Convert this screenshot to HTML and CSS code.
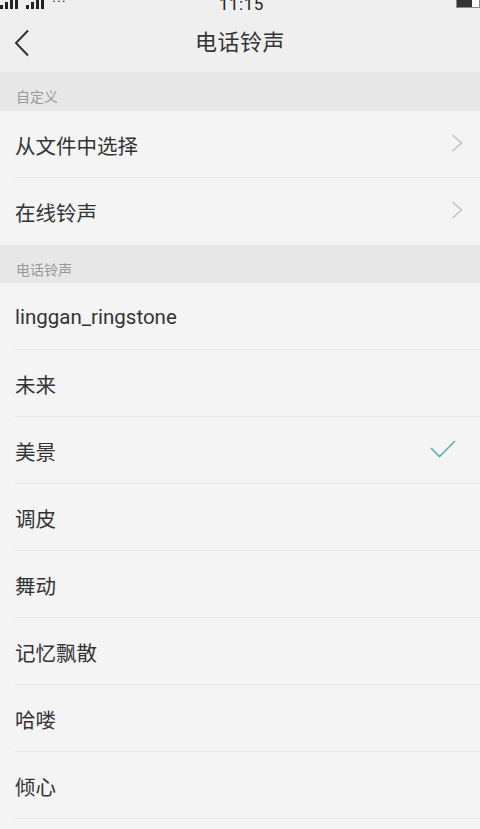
FILE: index.html
```html
<!DOCTYPE html>
<html lang="zh-CN">
<head>
	<meta charset="UTF-8">
	<title>电话铃声</title>
	<link rel="stylesheet" href="styles.css">
</head>
<body>
	<div class="status-bar">
		<span class="signal">
			<i class="bar b1"></i><i class="bar b2"></i><i class="bar b3"></i><i class="bar b4"></i>
			<i class="gap"></i>
			<i class="bar b1"></i><i class="bar b2"></i><i class="bar b3"></i><i class="bar b4"></i>
			<span class="dots">···</span>
		</span>
		<span class="clock">11:15</span>
		<span class="battery"><i class="level"></i></span>
	</div>

	<header class="title-bar">
		<span class="back">
			<svg width="16" height="28" viewBox="0 0 16 28"><path d="M14 1.5 L2 14 L14 26.5" fill="none" stroke="#333" stroke-width="2"/></svg>
		</span>
		<h1>电话铃声</h1>
	</header>

	<div class="group-title first">自定义</div>
	<ul class="list">
		<li>从文件中选择<span class="more"><svg width="12" height="18" viewBox="0 0 12 18"><path d="M1.5 1 L10.5 9 L1.5 17" fill="none" stroke="#c2c2c2" stroke-width="1.5"/></svg></span></li>
		<li class="last">在线铃声<span class="more"><svg width="12" height="18" viewBox="0 0 12 18"><path d="M1.5 1 L10.5 9 L1.5 17" fill="none" stroke="#c2c2c2" stroke-width="1.5"/></svg></span></li>
	</ul>

	<div class="group-title">电话铃声</div>
	<ul class="list">
		<li>linggan_ringstone</li>
		<li>未来</li>
		<li class="checked">美景<span class="tick"><svg width="26" height="20" viewBox="0 0 26 20"><path d="M1 9 L9.5 17.5 L25 2" fill="none" stroke="#5fb1ad" stroke-width="1.6"/></svg></span></li>
		<li>调皮</li>
		<li>舞动</li>
		<li>记忆飘散</li>
		<li>哈喽</li>
		<li>倾心</li>
	</ul>
</body>
</html>
```

FILE: styles.css
```css
/*--reset--*/
ul {
	margin: 0;
	padding: 0;
	list-style: none;
}
h1 {
	margin: 0;
}
body {
	margin: 0;
	width: 480px;
	height: 829px;
	overflow: hidden;
	background: #f4f4f4;
	color: #333;
	font-family: Roboto, "Noto Sans CJK SC", sans-serif;
}

/**
 * status bar, top half is cut off
 */
.status-bar {
	height: 10px;
	overflow: hidden;
	display: flex;
	align-items: flex-end;
	justify-content: space-between;
	background: #efefef;
	font-size: 17px;
	line-height: 18px;
}
.signal {
	display: flex;
	align-items: flex-end;
	gap: 2px;
	height: 18px;
	padding-bottom: 1px;
	box-sizing: border-box;
}
.signal .bar {
	display: block;
	width: 3px;
	background: #222;
}
.signal .b1 { height: 4px; }
.signal .b2 { height: 7px; }
.signal .b3 { height: 11px; }
.signal .b4 { height: 15px; }
.signal .gap { width: 4px; }
.signal .dots {
	margin-left: 6px;
	font-size: 15px;
	line-height: 10px;
	letter-spacing: 1px;
	color: #333;
	padding-bottom: 2px;
}
.clock {
	margin-left: -40px;
	margin-bottom: -3px;
	color: #222;
	letter-spacing: 0.5px;
}
.battery {
	display: flex;
	width: 24px;
	height: 16px;
	margin-bottom: 2px;
	border: 1px solid #888;
	background: #fff;
	box-sizing: border-box;
}
.battery .level {
	display: block;
	width: 15px;
	background: #333;
}

/**
 * title bar
 */
.title-bar {
	height: 62px;
	display: flex;
	align-items: center;
	justify-content: center;
	position: relative;
	background: #efefef;
}
.title-bar h1 {
	font-size: 22px;
	font-weight: normal;
	color: #333;
	letter-spacing: 0.5px;
	margin-top: -3px;
}
.back {
	position: absolute;
	left: 14px;
	top: 19px;
	display: flex;
}

/**
 * grouped list
 */
.group-title {
	height: 38px;
	box-sizing: border-box;
	padding: 15px 0 0 16px;
	background: #e7e7e7;
	color: #999;
	font-size: 14px;
	line-height: 20px;
}
.group-title.first {
	height: 38.5px;
}
.list li {
	height: 67px;
	margin-left: 15px;
	padding: 2px 17px 0 0;
	display: flex;
	align-items: center;
	justify-content: space-between;
	border-bottom: 1px solid #e6e6e6;
	box-sizing: border-box;
	font-size: 20.5px;
	color: #333;
}
.list li.last {
	border-bottom: none;
}
.more {
	display: flex;
	margin-top: -4px;
}
.tick {
	display: flex;
	margin-right: 7px;
	margin-top: -4px;
}
```
